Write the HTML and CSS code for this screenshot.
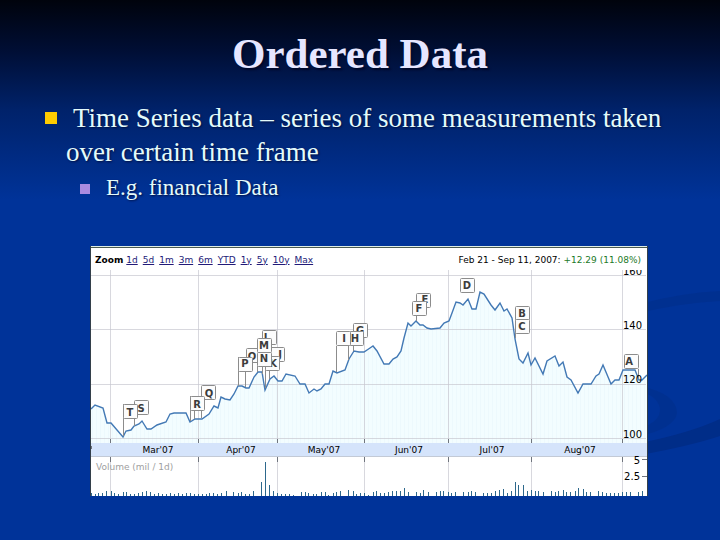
FILE: index.html
```html
<!DOCTYPE html>
<html lang="en">
<head>
<meta charset="utf-8">
<title>Ordered Data</title>
<link rel="stylesheet" href="styles.css">
</head>
<body>
<svg class="swirl" viewBox="0 0 720 540" preserveAspectRatio="none" aria-hidden="true">
  <path d="M640 304Q680 293 720 291V301Q680 303 640 313Z" opacity=".5"/>
  <path d="M640 386Q677 394 677 413Q675 428 640 436V428Q661 422 660 408Q657 396 640 391Z" opacity=".5"/>
  <path d="M640 443Q690 433 720 419V436Q690 446 640 455Z"/>
</svg>
<main class="slide">
  <h1 class="title">Ordered Data</h1>
  <ul class="points">
    <li class="point"><span class="lead"></span>Time Series data – series of some measurements taken over certain time frame
      <ul class="subpoints">
        <li class="subpoint">E.g. financial Data</li>
      </ul>
    </li>
  </ul>
  <section class="chart" aria-label="Price chart">
    <header class="bar">
      <nav class="zoom">
        <strong>Zoom</strong>
        <a href="#">1d</a><a href="#">5d</a><a href="#">1m</a><a href="#">3m</a><a href="#">6m</a><a href="#">YTD</a><a href="#">1y</a><a href="#">5y</a><a href="#">10y</a><a href="#">Max</a>
      </nav>
      <p class="range">Feb 21 - Sep 11, 2007: <span class="gain">+12.29 (11.08%)</span></p>
    </header>
    <svg class="plot" viewBox="91 270 556 226">
      <defs>
        <pattern id="weave" width="4" height="4" patternUnits="userSpaceOnUse">
          <rect width="4" height="4" fill="#f3fdff"/>
          <path d="M.5 0V4" stroke="#edf9fd"/>
        </pattern>
      </defs>
      <path class="area" d="M91 409L95 405L103 408L107 423L111 423L123 437L126 431L131 430L134 426L139 424L142 421L147 429L151 429L157 425L166 422L170 414L174 413L186 413L190 422L195 419L202 419L209 414L214 406L218 408L221 397L225 399L230 400L234 394L238 386L242 386L246 388L249 388L254 377L258 372L262 372L265 390L270 379L274 376L278 381L282 381L286 374L295 376L300 384L305 384L309 393L314 389L317 391L321 389L325 384L329 384L333 371L337 373L345 370L349 359L354 351L359 352L364 352L370 348L373 346L377 351L384 364L389 364L393 359L397 357L401 351L404 338L408 323L411 326L416 321L420 325L423 325L427 328L431 329L440 328L444 323L449 321L452 313L456 302L460 303L463 305L468 299L472 309L476 309L480 292L484 294L491 305L495 310L500 303L504 311L507 309L512 318L515 339L519 359L523 363L528 353L531 365L535 358L543 374L547 361L555 356L559 366L563 362L567 377L571 380L578 393L583 384L591 384L596 376L599 374L603 365L611 384L615 380L619 380L623 370L635 370L639 380L642 380L647 375V443H91Z"/>
      <path class="grid" d="M91 275.5H646M91 329.5H646M91 384.5H646M91 438.5H646M110.5 270V496M198.5 270V496M277.5 270V496M364.5 270V496M448.5 270V496M531.5 270V496M622.5 270V496"/>
      <path class="line" d="M91 409L95 405L103 408L107 423L111 423L123 437L126 431L131 430L134 426L139 424L142 421L147 429L151 429L157 425L166 422L170 414L174 413L186 413L190 422L195 419L202 419L209 414L214 406L218 408L221 397L225 399L230 400L234 394L238 386L242 386L246 388L249 388L254 377L258 372L262 372L265 390L270 379L274 376L278 381L282 381L286 374L295 376L300 384L305 384L309 393L314 389L317 391L321 389L325 384L329 384L333 371L337 373L345 370L349 359L354 351L359 352L364 352L370 348L373 346L377 351L384 364L389 364L393 359L397 357L401 351L404 338L408 323L411 326L416 321L420 325L423 325L427 328L431 329L440 328L444 323L449 321L452 313L456 302L460 303L463 305L468 299L472 309L476 309L480 292L484 294L491 305L495 310L500 303L504 311L507 309L512 318L515 339L519 359L523 363L528 353L531 365L535 358L543 374L547 361L555 356L559 366L563 362L567 377L571 380L578 393L583 384L591 384L596 376L599 374L603 365L611 384L615 380L619 380L623 370L635 370L639 380L642 380L647 375"/>
      <path class="band" d="M91 443H647V457H91Z"/>
      <path class="bandline" d="M91 456.5H647"/>
      <path class="tick" d="M110.5 439V443M198.5 439V443M277.5 439V443M364.5 439V443M448.5 439V443M531.5 439V443M622.5 439V443M110.5 457V462M198.5 457V462M277.5 457V462M364.5 457V462M448.5 457V462M531.5 457V462M622.5 457V462M642 459.5H647M642 476.5H647M91.5 446V449"/>
      <path class="pole" d="M123.5 404V436M134.5 415V426M190.5 396V421M194.5 411V419M201.5 400V418M238.5 357V386M245.5 371V387M257.5 366V372M262.5 366V374M265.5 366V388M269.5 370V379M336.5 346V372M348.5 346V360M353.5 346V351M416.5 316V321M515.5 319V338M638.5 369V379"/>
      <g class="flags">
        <rect x="134.5" y="400.5" width="14" height="14" rx="1"/><text x="141" y="412">S</text>
        <rect x="123.5" y="404.5" width="14" height="14" rx="1"/><text x="130" y="416">T</text>
        <rect x="201.5" y="385.5" width="14" height="14" rx="1"/><text x="209" y="397">Q</text>
        <rect x="190.5" y="396.5" width="14" height="14" rx="1"/><text x="197" y="408">R</text>
        <rect x="262.5" y="330.5" width="14" height="14" rx="1"/><text x="267" y="341">L</text>
        <rect x="270.5" y="347.5" width="14" height="14" rx="1"/><text x="280" y="358">J</text>
        <rect x="265.5" y="356.5" width="14" height="14" rx="1"/><text x="273" y="367">K</text>
        <rect x="246.5" y="348.5" width="14" height="14" rx="1"/><text x="252" y="360">O</text>
        <rect x="257.5" y="352.5" width="14" height="14" rx="1"/><text x="264" y="362">N</text>
        <rect x="257.5" y="338.5" width="14" height="14" rx="1"/><text x="264" y="349">M</text>
        <rect x="238.5" y="357.5" width="14" height="14" rx="1"/><text x="245" y="367">P</text>
        <rect x="353.5" y="323.5" width="14" height="14" rx="1"/><text x="360" y="334">G</text>
        <rect x="349.5" y="331.5" width="14" height="14" rx="1"/><text x="355" y="342">H</text>
        <rect x="336.5" y="331.5" width="14" height="14" rx="1"/><text x="344" y="342">I</text>
        <rect x="416.5" y="293.5" width="14" height="14" rx="1"/><text x="425" y="303">E</text>
        <rect x="412.5" y="301.5" width="14" height="14" rx="1"/><text x="419" y="312">F</text>
        <rect x="460.5" y="278.5" width="14" height="14" rx="1"/><text x="467" y="289">D</text>
        <rect x="515.5" y="306.5" width="14" height="14" rx="1"/><text x="522" y="317">B</text>
        <rect x="515.5" y="319.5" width="14" height="14" rx="1"/><text x="522" y="330">C</text>
        <rect x="624.5" y="354.5" width="14" height="14" rx="1"/><text x="629" y="365">A</text>
      </g>
      <g class="months">
        <text x="158" y="453">Mar'07</text><text x="241" y="453">Apr'07</text><text x="324" y="453">May'07</text><text x="409" y="453">Jun'07</text><text x="492" y="453">Jul'07</text><text x="580" y="453">Aug'07</text>
      </g>
      <g class="scale">
        <text x="642" y="275">160</text><text x="642" y="329">140</text><text x="642" y="383">120</text><text x="642" y="438">100</text><text x="640" y="464">5</text><text x="640" y="480">2.5</text>
      </g>
      <text class="volume" x="96" y="470">Volume (mil / 1d)</text>
      <path class="bars" d="M91.5 496v-3M95.5 496v-2M98.5 496v-3M102.5 496v-3M106.5 496v-5M111.5 496v-5M114.5 496v-3M118.5 496v-2M123.5 496v-4M126.5 496v-4M130.5 496v-2M134.5 496v-2M138.5 496v-3M142.5 496v-4M146.5 496v-5M150.5 496v-4M154.5 496v-2M158.5 496v-3M162.5 496v-2M166.5 496v-2M170.5 496v-3M174.5 496v-2M178.5 496v-3M182.5 496v-2M186.5 496v-3M190.5 496v-3M194.5 496v-2M198.5 496v-2M202.5 496v-2M206.5 496v-2M209.5 496v-3M213.5 496v-3M217.5 496v-2M221.5 496v-3M226.5 496v-5M233.5 496v-4M238.5 496v-3M241.5 496v-4M245.5 496v-2M249.5 496v-2M253.5 496v-5M261.5 496v-14M265.5 496v-34M269.5 496v-11M273.5 496v-5M277.5 496v-3M281.5 496v-2M285.5 496v-2M289.5 496v-2M293.5 496v-1M301.5 496v-4M305.5 496v-4M308.5 496v-3M313.5 496v-2M316.5 496v-2M321.5 496v-4M325.5 496v-4M328.5 496v-1M333.5 496v-3M336.5 496v-4M340.5 496v-5M348.5 496v-6M353.5 496v-5M356.5 496v-2M360.5 496v-3M364.5 496v-3M368.5 496v-1M373.5 496v-4M376.5 496v-5M380.5 496v-3M384.5 496v-3M388.5 496v-4M392.5 496v-5M396.5 496v-5M400.5 496v-5M404.5 496v-8M408.5 496v-4M416.5 496v-4M420.5 496v-3M423.5 496v-6M428.5 496v-4M436.5 496v-4M440.5 496v-5M443.5 496v-5M448.5 496v-4M451.5 496v-3M455.5 496v-4M463.5 496v-4M468.5 496v-4M471.5 496v-5M475.5 496v-4M483.5 496v-3M487.5 496v-3M491.5 496v-3M495.5 496v-5M499.5 496v-6M503.5 496v-7M507.5 496v-3M511.5 496v-5M515.5 496v-14M518.5 496v-11M523.5 496v-11M527.5 496v-5M531.5 496v-6M535.5 496v-5M538.5 496v-5M543.5 496v-4M551.5 496v-5M555.5 496v-4M558.5 496v-5M563.5 496v-6M566.5 496v-4M570.5 496v-4M575.5 496v-5M578.5 496v-8M583.5 496v-7M586.5 496v-4M590.5 496v-4M598.5 496v-5M602.5 496v-4M606.5 496v-3M610.5 496v-3M614.5 496v-3M618.5 496v-3M622.5 496v-4M626.5 496v-4M630.5 496v-4M638.5 496v-4M642.5 496v-5"/>
    </svg>
  </section>
</main>
</body>
</html>
```

FILE: styles.css
```css
* {
  box-sizing: border-box;
}

body {
  margin: 0;
  min-height: 100vh;
  background: linear-gradient(#00030c 0, #000e34 50px, #00226a 110px, #003399 200px) #003399;
  color: #e4fbfb;
  font-family: "Liberation Serif", serif;
}

.swirl {
  position: absolute;
  inset: 0;
  width: 100%;
  height: 100%;
  fill: #002d88;
}

.slide {
  position: relative;
  padding: 28px 0 44px;
}

.title {
  margin: 0;
  color: #e6e6ff;
  font-size: 43px;
  line-height: 52px;
  text-align: center;
  text-shadow: 2px 2px 2px #00082a;
}

.points,
.subpoints {
  margin: 0;
  padding: 0;
  list-style: none;
}

.points {
  padding: 21px 40px 0 66px;
  font-size: 27px;
  line-height: 34px;
  text-shadow: 1px 1px 2px #001040;
}

.lead {
  padding-left: 7px;
}

.point::before,
.subpoint::before {
  content: "";
  position: absolute;
}

.point::before {
  width: 12px;
  height: 12px;
  margin: 11px 0 0 -21px;
  background: #ffcc00;
}

.subpoints {
  padding: 2px 0 0 40px;
  font-size: 23px;
}

.subpoint::before {
  width: 10px;
  height: 10px;
  margin: 13px 0 0 -26px;
  background: #a98be0;
}

.chart {
  width: 77.5%;
  margin: 41px 0 0 12.5%;
  border: solid #333f4a;
  border-width: 0 1px;
  background: #fff;
  color: #000;
  font-family: "DejaVu Sans", sans-serif;
  font-size: 9px;
}

.bar {
  display: flex;
  justify-content: space-between;
  align-items: center;
  height: 24px;
  padding: 2px 6px 0 4px;
  border-top: 1px solid #e0eee4;
  box-shadow: inset 0 1px #4a5a50;
}

.zoom {
  display: flex;
  gap: 5px;
}

.zoom strong {
  margin-right: -2px;
}

.zoom a {
  color: #221a78;
}

.range {
  margin: 0;
}

.gain {
  color: #1c7a28;
}

.plot {
  display: block;
  width: 100%;
}

.area {
  fill: url(#weave);
}

.grid {
  stroke: #c8c8d0;
  stroke-opacity: 0.7;
}

.line {
  fill: none;
  stroke: #4379b5;
  stroke-width: 1.4;
}

.band {
  fill: #d5e4fb;
}

.bandline {
  stroke: #c3cad6;
}

.tick {
  stroke: #70757e;
}

.pole {
  stroke: #8c8c8c;
}

.flags rect {
  fill: #fcfcfc;
  stroke: #8c8c8c;
}

.flags text {
  fill: #3c3c3c;
  font-size: 10px;
  font-weight: bold;
  text-anchor: middle;
}

.months text {
  text-anchor: middle;
}

.scale text {
  font-size: 10px;
  text-anchor: end;
}

.volume {
  fill: #a0a0a0;
}

.bars {
  stroke: #2d688c;
}
```
